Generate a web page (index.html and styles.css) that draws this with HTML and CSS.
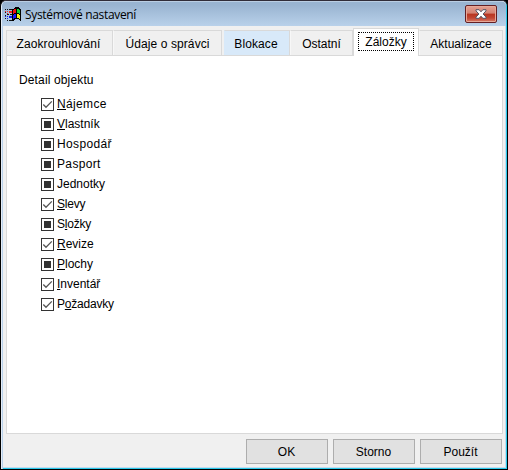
FILE: index.html
```html
<!DOCTYPE html>
<html lang="cs">
<head>
<meta charset="utf-8">
<title>Systémové nastavení</title>
<link rel="stylesheet" href="styles.css">
</head>
<body>
<svg class="defs" width="0" height="0">
<symbol id="check" viewBox="0 0 13 13"><path d="M2.3 6.5 5 9.3 10.8 3.4" fill="none" stroke="#555" stroke-width="1.3"/></symbol>
</svg>
<main class="window">
<header class="titlebar">
<svg class="logo" width="17" height="16" viewBox="0 0 17 16" shape-rendering="crispEdges">
<path d="M7 2h2V1h1V0h4v1h1v1h1v12h-1v-1h-1v-1h-4v1H9v1H7z" fill="#000"/>
<path d="M0 2h1v1H0zM2 2h1v1H2zM4 2h3v1H4zM0 5h1v1H0zM0 8h1v1H0zM2 7h2v1H2zM5 7h2v1H5zM0 11h1v1H0zM2 13h1v1H2zM4 13h3v1H4z" fill="#111"/>
<path d="M0 4h1v1H0zM2 4h1v1H2zM4 4h3v2H4zM2 6h1v1H2z" fill="#f02020"/>
<path d="M0 9h1v1H0zM2 9h1v1H2zM4 9h3v2H4zM2 11h1v1H2z" fill="#1020e8"/>
<path d="M8 3h1V2h2v4H9v1H8z" fill="#f01010"/>
<path d="M12 2h2v1h1v4h-1V6h-2z" fill="#10d030"/>
<path d="M8 8h1V7h2v4H9v1H8z" fill="#1818f8"/>
<path d="M12 7h2v1h1v4h-1v-1h-2z" fill="#f8f010"/>
</svg>
<h1 class="title">Systémové nastavení</h1>
<button class="close" aria-label="Zavřít"><svg width="12" height="10" viewBox="0 0 12 10"><path d="M1 .7h3.1L6 2.8 7.9.7H11v1.2L8.1 5 11 8.1v1.2H7.9L6 7.2 4.1 9.3H1V8.1L3.9 5 1 1.9z" fill="#fff" stroke="#535666"/></svg></button>
</header>
<nav class="tabs">
<span class="tab first">Zaokrouhlování</span>
<span class="tab admin">Údaje o správci</span>
<span class="tab hot">Blokace</span>
<span class="tab other">Ostatní</span>
<span class="tab active"><span class="focus">Záložky</span></span>
<span class="tab last">Aktualizace</span>
</nav>
<section class="panel">
<h2 class="heading">Detail objektu</h2>
<ul class="options">
<li class="wide"><span class="box"><svg><use href="#check"/></svg></span><span><u>N</u>ájemce</span></li>
<li><span class="box mixed"></span><span><u>V</u>lastník</span></li>
<li class="wide"><span class="box mixed"></span><span>Hospodář</span></li>
<li class="wide"><span class="box mixed"></span><span>Pasport</span></li>
<li><span class="box mixed"></span><span>Jednotky</span></li>
<li class="tight"><span class="box"><svg><use href="#check"/></svg></span><span><u>S</u>levy</span></li>
<li class="tight"><span class="box mixed"></span><span>S<u>l</u>ožky</span></li>
<li><span class="box"><svg><use href="#check"/></svg></span><span><u>R</u>evize</span></li>
<li><span class="box mixed"></span><span><u>P</u>lochy</span></li>
<li><span class="box"><svg><use href="#check"/></svg></span><span><u>I</u>nventář</span></li>
<li class="tight"><span class="box"><svg><use href="#check"/></svg></span><span>P<u>o</u>žadavky</span></li>
</ul>
</section>
<footer class="actions"><button>OK</button><button>Storno</button><button>Použít</button></footer>
</main>
</body>
</html>
```
FILE: styles.css
```css
* { box-sizing: border-box; }
body { margin: 0; background: #000; overflow: hidden; font: 12px/14px "Liberation Sans", Arial, sans-serif; color: #000; }
.defs { display: block; }
.window {
  width: 508px; height: 470px; padding: 0 3px 2px 1px;
  display: flex; flex-direction: column;
  background: #f0f0f0;
  border: 1px solid #000; border-top-color: #302c38; border-radius: 6px 6px 0 0;
  box-shadow: inset 1px 0 #e4edf8, inset 2px 0 #b9d1ea, inset -1px -1px #29c8ea, inset -2px -2px #c5dced;
}
.titlebar { height: 25px; flex: none; margin: 0 -2px 0 0; padding: 0 10px 0 3px; display: flex; align-items: flex-start; background: linear-gradient(#dbe7f4 0, #99b4d1 1px, #99b4d1 4px, #b9d1ea 100%); border-radius: 5px 5px 0 0; }
.logo { margin-top: 6px; }
.title { margin: 6px 0 0 3px; font: 12px/16px "Open Sans", "Noto Sans", sans-serif; letter-spacing: -.33px; white-space: nowrap; }
.close { width: 32px; height: 18px; margin: 4px 0 0 auto; padding: 0; display: flex; align-items: center; justify-content: center; border: 1px solid #641f24; border-radius: 2px; background: linear-gradient(#e5a093 0, #d38272 45%, #b83520 50%, #c14633 75%, #d87d69 100%); box-shadow: inset 0 0 0 1px #e6a898; }
.close { position: relative; left: 1px; }
.tabs { height: 29px; flex: none; margin: 0 1px 0 4px; display: flex; align-items: flex-end; }
.tab { height: 25px; display: flex; align-items: center; justify-content: center; padding: 2px 2px 0 0; white-space: nowrap; border: 1px solid #d9d9d9; border-bottom: 0; border-left-color: #f7f7f7; background: #f0f0f0; }
.first { width: 107px; border-left-color: #d9d9d9; letter-spacing: .08px; }
.admin { width: 109px; padding-right: 0; letter-spacing: .1px; }
.hot { width: 66px; margin-left: 2px; background: #d8e9f9; border-left-color: #d8e9f9; letter-spacing: .1px; }
.other { width: 63px; padding-right: 0; }
.active { width: 66px; height: 28px; margin-bottom: -1px; padding: 0; position: relative; background: #fff; border-left-color: #d9d9d9; align-items: flex-start; }
.focus { width: 56px; height: 19px; margin-top: 3px; padding-top: 3px; border: 1px dotted #000; text-align: center; line-height: 13px; }
.last { width: 84px; padding-right: 0; }
.panel { height: 379px; flex: none; margin: 0 1px 0 4px; padding: 17px 0 0 12px; border: 1px solid #d9d9d9; background: #fff; }
.heading { margin: 0; font: inherit; letter-spacing: .14px; }
.options { margin: 7px 0 0 22px; padding: 0; list-style: none; }
.options li { height: 20px; display: flex; align-items: center; gap: 3px; }
.options .wide { letter-spacing: .35px; }
.options .tight { letter-spacing: -.2px; }
.box { width: 13px; height: 13px; display: grid; place-items: center; border: 1px solid #333; background: #fff; }
.box svg { width: 13px; height: 13px; margin: -1px; }
.mixed::before { content: ""; width: 7px; height: 7px; background: #333; }
u { text-decoration-thickness: 1px; text-underline-offset: 1px; text-decoration-skip-ink: none; }
.actions { display: flex; justify-content: flex-end; gap: 5px; padding: 5px 2px 0 0; }
.actions button { width: 82px; height: 25px; padding: 1px 1px 0 0; border: 1px solid #adadad; background: #e1e1e1; color: #000; font: inherit; }
```
